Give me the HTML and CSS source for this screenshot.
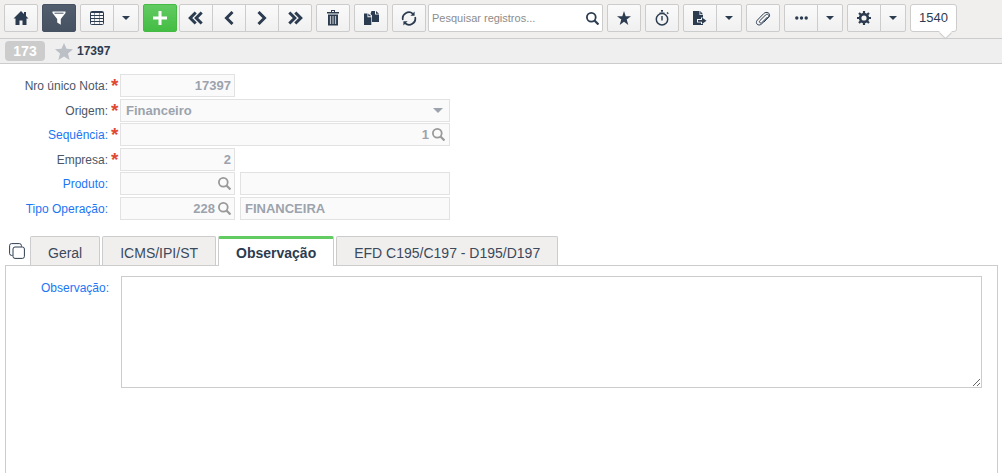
FILE: index.html
```html
<!DOCTYPE html>
<html lang="pt-BR">
<head>
    <meta charset="utf-8">
    <title>Nota 17397</title>
    <link rel="stylesheet" href="styles.css">
</head>
<body>
    <svg class="defs" aria-hidden="true">
        <symbol id="i-caret" viewBox="0 0 10 5"><path d="M0 0h10L5 5z"/></symbol>
        <symbol id="i-search" viewBox="0 0 13 13"><circle cx="5.3" cy="5.3" r="4.4" fill="none" stroke="currentColor" stroke-width="1.8"/><path d="M8.5 8.5l4 4" stroke="currentColor" stroke-width="2.2"/></symbol>
    </svg>

    <div class="toolbar">
        <button type="button" class="btn" aria-label="Início"><svg width="16" height="14" viewBox="0 0 16 14"><path d="M8 0l3 2.900V1h2v3.900L15.500 7.500H13.500V14H9.500V9.500h-3V14h-4V7.500H.5z"/></svg></button>
        <button type="button" class="btn btn-dark" aria-label="Filtro"><svg width="14" height="14" viewBox="0 0 14 14"><path d="M.5.5h13v1.500L8.800 8v5.800L5.200 11.500V8L.5 2z"/><path d="M2.500 2.200h9" stroke="#4a5566"/></svg></button>
        <div class="group">
            <button type="button" class="btn" aria-label="Grade"><svg class="line" width="14" height="14" viewBox="0 0 14 14"><rect x=".5" y=".5" width="13" height="13" rx="1"/><path d="M1 1.500h12M1 4.500h12M1 7.500h12M1 10.500h12"/><path d="M4.500 2v11M9.500 2v11" opacity=".5"/></svg></button>
            <button type="button" class="btn btn-caret" aria-label="Opções da grade"><svg width="8" height="4"><use href="#i-caret"/></svg></button>
        </div>
        <button type="button" class="btn btn-green" aria-label="Adicionar"><svg width="14" height="14" viewBox="0 0 14 14"><path d="M5.500 0h3v5.500H14v3H8.500V14h-3V8.500H0v-3h5.500z"/></svg></button>
        <div class="group group-near">
            <button type="button" class="btn" aria-label="Primeiro"><svg class="chev" width="16" height="14" viewBox="0 0 16 14"><path d="M7.700 1.500L2.200 7l5.500 5.500M13.700 1.500L8.200 7l5.500 5.500"/></svg></button>
            <button type="button" class="btn" aria-label="Anterior"><svg class="chev" width="10" height="14" viewBox="0 0 10 14"><path d="M8.500 1L2.500 7l6 6"/></svg></button>
            <button type="button" class="btn" aria-label="Próximo"><svg class="chev" width="10" height="14" viewBox="0 0 10 14"><path d="M1.500 1l6 6-6 6"/></svg></button>
            <button type="button" class="btn" aria-label="Último"><svg class="chev" width="16" height="14" viewBox="0 0 16 14"><path d="M2.300 1.500L7.800 7l-5.500 5.500M8.300 1.500L13.800 7l-5.500 5.500"/></svg></button>
        </div>
        <button type="button" class="btn" aria-label="Excluir"><svg width="12" height="16" viewBox="0 0 12 16"><path d="M4 0h4v2h4v1.500H0V2h4zM5 1v1h2V1z" fill-rule="evenodd"/><path d="M1 4.500h10V15.500H1z"/><path d="M3.500 6v8M6 6v8M8.500 6v8" stroke="#bcc1c8" stroke-width="1.200"/></svg></button>
        <button type="button" class="btn" aria-label="Duplicar"><svg width="15" height="14" viewBox="0 0 15 14"><path d="M7.500 0H11v3.500h4V11H8V4.500L6.500 3zM12 0l3 2.700h-3z"/><path d="M0 2.500h3.500V6.200H7.300V14H0zM4.300 2.500l3 2.800h-3z"/></svg></button>
        <button type="button" class="btn" aria-label="Atualizar"><svg width="16" height="15" viewBox="0 0 16 15"><path d="M1.900 9A6.200 6.200 0 0 1 12 2.800M14.100 6A6.200 6.200 0 0 1 4 12.200" fill="none" stroke="currentColor" stroke-width="1.700"/><path d="M13.600.5v4.200H9.400zM2.400 14.500v-4.200h4.200z"/></svg></button>
        <div class="search">
            <input type="text" placeholder="Pesquisar registros..." aria-label="Pesquisar registros">
            <button type="button" class="pick" aria-label="Pesquisar"><svg width="13" height="13"><use href="#i-search"/></svg></button>
        </div>
        <button type="button" class="btn" aria-label="Favoritos"><svg width="14" height="14" viewBox="0 0 14 14"><path d="M7 0l1.700 5.200H14l-4.300 3.300L11.300 14 7 10.700 2.700 14l1.600-5.500L0 5.200h5.300z"/></svg></button>
        <button type="button" class="btn" aria-label="Tempo"><svg width="14" height="16" viewBox="0 0 14 16"><circle cx="7" cy="9.300" r="5.700" fill="none" stroke="currentColor" stroke-width="1.500"/><path d="M6 0h2v1.800H6zM4.500 2.500h5v1h-5zM6.300 6h1.400v4.500H6.300zM11.500 3l1-1 1.300 1.300-1 1z"/></svg></button>
        <div class="group">
            <button type="button" class="btn" aria-label="Exportar"><svg width="14" height="14" viewBox="0 0 14 14"><path d="M0 0h6.500v4H10v2.500H8V8H4v3.500h4V13h2v1H0zM7.300 0L10 3.200H7.300z"/><path d="M5 8.900h4V6.500l4.500 3.300L9 13v-2.300H5z"/></svg></button>
            <button type="button" class="btn btn-caret" aria-label="Opções de exportação"><svg width="8" height="4"><use href="#i-caret"/></svg></button>
        </div>
        <button type="button" class="btn" aria-label="Anexos"><svg class="line" width="16" height="15" viewBox="0 0 16 15"><path d="M12.500 6L6.800 11.700c-1.200 1.200-3.300-.6-2-2L10.500 4c2-2 4.600.4 2.700 2.500L6.500 13c-3 2.700-6.900-.6-4.200-3.800l6.400-6.600C11.500 0 15.800 2 14.300 5.500L9 11"/></svg></button>
        <div class="group">
            <button type="button" class="btn" aria-label="Mais"><svg width="13" height="4" viewBox="0 0 13 4"><circle cx="1.800" cy="2" r="1.700"/><circle cx="6.500" cy="2" r="1.700"/><circle cx="11.200" cy="2" r="1.700"/></svg></button>
            <button type="button" class="btn btn-caret" aria-label="Mais opções"><svg width="8" height="4"><use href="#i-caret"/></svg></button>
        </div>
        <div class="group">
            <button type="button" class="btn" aria-label="Configurações"><svg width="14" height="14" viewBox="0 0 14 14"><circle cx="7" cy="7" r="3.900" fill="none" stroke="currentColor" stroke-width="2.600"/><path d="M7 0v2.500M7 11.500V14M0 7h2.500M11.500 7H14M2 2l1.800 1.800M10.200 10.200L12 12M12 2l-1.800 1.800M3.800 10.200L2 12" stroke="currentColor" stroke-width="2.200"/></svg></button>
            <button type="button" class="btn btn-caret" aria-label="Opções de configuração"><svg width="8" height="4"><use href="#i-caret"/></svg></button>
        </div>
        <div class="bubble">1540</div>
    </div>

    <div class="status">
        <span class="badge">173</span>
        <svg class="star" width="18" height="17" viewBox="0 0 18 17"><path d="M9 0l2.500 5.800 6.500.5-5 4.200L14.600 17 9 13.500 3.400 17 5 10.500 0 6.300l6.500-.5z"/></svg>
        <strong>17397</strong>
    </div>

    <form class="form">
        <label for="nota">Nro único Nota:</label><i class="req">*</i>
        <div class="fields"><div class="field short"><input id="nota" class="num" type="text" value="17397" disabled></div></div>

        <label for="origem">Origem:</label><i class="req">*</i>
        <div class="fields"><div class="field long"><select id="origem" disabled><option>Financeiro</option></select><svg class="drop" width="10" height="5"><use href="#i-caret"/></svg></div></div>

        <label for="seq" class="link">Sequência:</label><i class="req">*</i>
        <div class="fields"><div class="field long"><input id="seq" class="num" type="text" value="1" disabled><button type="button" class="pick" aria-label="Buscar sequência"><svg width="13" height="13"><use href="#i-search"/></svg></button></div></div>

        <label for="empresa">Empresa:</label><i class="req">*</i>
        <div class="fields"><div class="field short"><input id="empresa" class="num" type="text" value="2" disabled></div></div>

        <label for="produto" class="link">Produto:</label><i class="req"></i>
        <div class="fields">
            <div class="field short"><input id="produto" class="num" type="text" disabled><button type="button" class="pick" aria-label="Buscar produto"><svg width="13" height="13"><use href="#i-search"/></svg></button></div>
            <div class="field desc"><input type="text" aria-label="Descrição do produto" disabled></div>
        </div>

        <label for="oper" class="link">Tipo Operação:</label><i class="req"></i>
        <div class="fields">
            <div class="field short"><input id="oper" class="num" type="text" value="228" disabled><button type="button" class="pick" aria-label="Buscar tipo de operação"><svg width="13" height="13"><use href="#i-search"/></svg></button></div>
            <div class="field desc"><input type="text" value="FINANCEIRA" aria-label="Descrição da operação" disabled></div>
        </div>
    </form>

    <div class="tabs">
        <button type="button" class="stack" aria-label="Abas"><svg class="line" width="16" height="16" viewBox="0 0 16 16"><rect x="4" y="4" width="11.400" height="11.400" rx="2"/><path d="M3.500 12.400H2.600a2 2 0 0 1-2-2V2.600a2 2 0 0 1 2-2h7.800a2 2 0 0 1 2 2v1"/></svg></button>
        <button type="button" class="tab">Geral</button>
        <button type="button" class="tab">ICMS/IPI/ST</button>
        <button type="button" class="tab on">Observação</button>
        <button type="button" class="tab">EFD C195/C197 - D195/D197</button>
    </div>
    <div class="panel">
        <label for="obs" class="link">Observação:</label>
        <textarea id="obs"></textarea>
    </div>
</body>
</html>
```
FILE: styles.css
```css
* { box-sizing: border-box; }
body { margin: 0; min-height: 100vh; display: flex; flex-direction: column; background: #fff; color: #2c3c50; font: 12px/16px "Liberation Sans", Arial, sans-serif; }
button, input, select, textarea { font: inherit; color: inherit; }
svg { display: block; fill: currentColor; flex: none; }
svg.line { fill: none; stroke: currentColor; }
.defs { position: absolute; width: 0; height: 0; }

/* toolbar */
.toolbar { display: flex; gap: 4px; padding: 4px 4px 6px; background: #f0efee; border-bottom: 1px solid #ccc; }
.group { display: flex; }
.group .btn + .btn { margin-left: -1px; border-radius: 0 2px 2px 0; }
.group .btn:first-child { border-radius: 2px 0 0 2px; }
.group-near, .search { margin-left: -2px; }
.group-near .btn:nth-child(2), .group-near .btn:nth-child(3) { border-radius: 0; }
.btn { display: flex; align-items: center; justify-content: center; width: 34px; height: 28px; padding: 0; border: 1px solid #ccc; border-radius: 2px; background: linear-gradient(#fafafa, #f0f0f0); }
.btn-caret { width: 26px; }
.btn-dark { color: #fff; border-color: #465162; background: linear-gradient(#525d6e, #465162); }
.btn-green { color: #fff; border-color: #45bb45; background: linear-gradient(#62cb62, #43bd43); }
svg.chev { fill: none; stroke: currentColor; stroke-width: 3; }
.search { display: flex; align-items: center; width: 175px; height: 28px; padding: 0 3px; border: 1px solid #ccc; border-radius: 2px; background: #fff; }
.search input { flex: 1; min-width: 0; padding: 0; border: 0; outline: 0; background: none; font-size: 11px; }
.search input::placeholder { color: #8c8c8c; }
.pick { padding: 0; border: 0; background: none; }
.bubble { position: relative; height: 28px; padding: 0 8px; border: 1px solid #ccc; border-radius: 3px; background: #fff; font-size: 13px; line-height: 26px; }
.bubble::after { content: ""; position: absolute; right: 6px; bottom: -5px; width: 9px; height: 9px; background: #fff; transform: rotate(45deg); box-shadow: 1px 1px 1px #ccc; }

/* status line */
.status { display: flex; align-items: center; height: 25px; padding: 0 5px; background: #efefef; border-bottom: 1px solid #ccc; }
.badge { width: 40px; border-radius: 4px; background: #ccc; color: #fff; font-size: 14px; font-weight: bold; line-height: 20px; text-align: center; }
.star { margin: 0 4px 0 10px; color: #bbbfc6; }

/* header form */
.form { display: grid; grid-template-columns: 108px 12px 1fr; grid-template-rows: 25px 24px 25px 24px 25px 23px; padding: 10px 0 16px; }
.form label { line-height: 24px; text-align: right; color: #4b5767; }
.form label.link, label.link { color: #1a76f5; }
.req { height: 23px; padding-left: 3px; color: #e04a33; font: bold 19px/24px "Liberation Sans", Arial, sans-serif; }
.fields { display: flex; gap: 5px; }
.field { display: flex; align-items: center; height: 23px; padding: 0 4px 0 3px; border: 1px solid #e2e2e2; background: #fafafa; color: #9ca3ad; }
.field input, .field select { flex: 1; min-width: 0; padding: 0 0 0 1px; border: 0; background: none; color: #9ca3ad; font-size: 13px; font-weight: bold; opacity: 1; appearance: none; }
.field select { padding-left: 2px; }
.field .num { padding: 0; text-align: right; }
.field .pick { margin-left: 3px; color: #999; }
.short { width: 115px; padding-right: 3px; }
.long { width: 330px; }
.desc { width: 210px; }
.drop { margin-right: 2px; }

/* tabs */
.tabs { display: flex; gap: 2px; padding: 0 5px; }
.stack { width: 23px; padding: 0 0 0 4px; border: 0; background: none; }
.tab { height: 29px; padding: 3px 17px 0; border: 1px solid #ccc; border-bottom: 0; border-radius: 2px 2px 0 0; background: #f0efee; color: #3b495b; font-size: 14px; }
.tab.on { height: 30px; margin-bottom: -1px; padding-top: 1px; border-top: 3px solid #62cb62; background: #fff; color: #2c3c50; font-weight: bold; z-index: 1; }
.panel { flex: 1; display: flex; align-items: flex-start; margin: 0 4px 0 5px; padding: 10px 15px 0 0; border: 1px solid #ccc; border-bottom: 0; }
.panel label { width: 103px; margin-right: 12px; line-height: 24px; text-align: right; }
.panel textarea { flex: 1; height: 112px; padding: 4px; border: 1px solid #ccc; border-radius: 0; background: #fff; outline: 0; }
```
